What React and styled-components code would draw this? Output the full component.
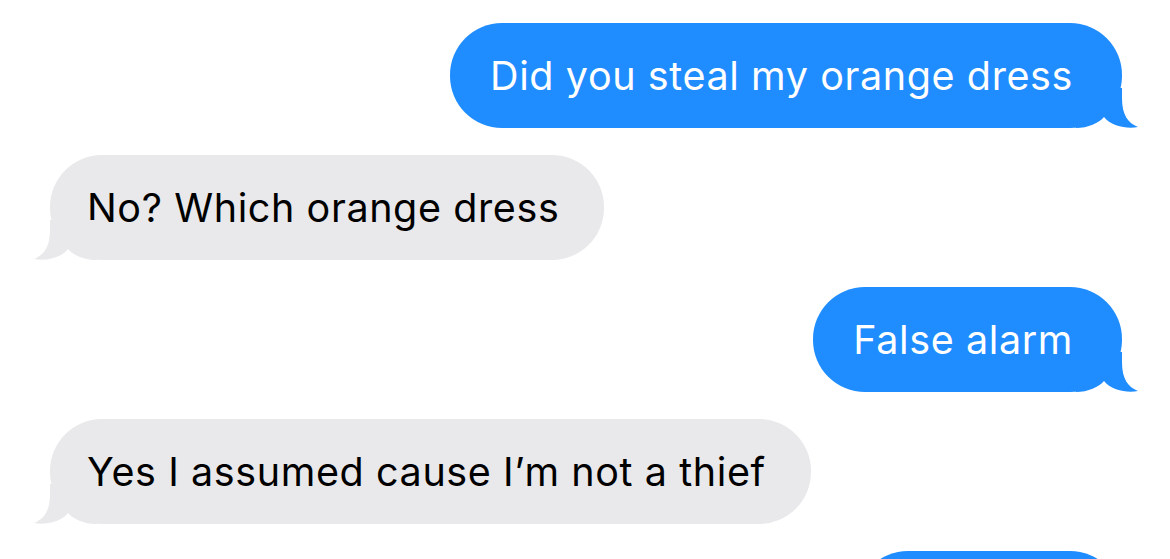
import React from "react";
import styled, { createGlobalStyle } from "styled-components";

const GlobalStyle = createGlobalStyle`
  html, body {
    margin: 0;
    padding: 0;
    background: #ffffff;
    overflow: hidden;
  }
`;

const Thread = styled.div`
  display: flex;
  flex-direction: column;
  gap: 27px;
  padding: 23px 48px 0 50px;
  height: 559px;
  box-sizing: border-box;
  overflow: hidden;
  font-family: Inter, "Liberation Sans", sans-serif;
`;

const Row = styled.div`
  display: flex;
  justify-content: ${(p) => (p.$mine ? "flex-end" : "flex-start")};
`;

const Bubble = styled.div`
  position: relative;
  flex-shrink: 0;
  box-sizing: border-box;
  height: 105px;
  min-width: ${(p) => p.$minWidth || 0}px;
  padding: ${(p) => (p.$mine ? "0 49px 0 40px" : "0 45px 0 37px")};
  border-radius: 52px;
  display: flex;
  align-items: center;
  white-space: nowrap;
  font-size: 39.5px;
  letter-spacing: 0.6px;
  color: ${(p) => (p.$mine ? "#ffffff" : "#000000")};
  background: ${(p) => (p.$mine ? "#1f8dff" : "#e9e9eb")};
`;

const Tail = styled.svg`
  position: absolute;
  bottom: 0;
  width: 62px;
  height: 40px;
  overflow: visible;
  ${(p) =>
    p.$mine
      ? "right: -16px;"
      : "left: -16px; transform: scaleX(-1);"}
`;

function BubbleTail({ mine }) {
  return (
    <Tail $mine={mine} viewBox="-46 -40 62 40">
      <path
        d="M 0 -40 L 0 -30 C 0 -13 6 -5 16 -1 C 6 1 -10 -1 -18 -11 C -23 -5 -34 0 -46 0 L -46 -40 Z"
        fill={mine ? "#1f8dff" : "#e9e9eb"}
      />
    </Tail>
  );
}

const messages = [
  { mine: true, text: "Did you steal my orange dress" },
  { mine: false, text: "No? Which orange dress" },
  { mine: true, text: "False alarm" },
  { mine: false, text: "Yes I assumed cause I’m not a thief" },
  { mine: true, text: "", minWidth: 266 },
];

export default function App() {
  return (
    <>
      <GlobalStyle />
      <Thread>
        {messages.map((m, i) => (
          <Row key={i} $mine={m.mine}>
            <Bubble $mine={m.mine} $minWidth={m.minWidth}>
              {m.text}
              <BubbleTail mine={m.mine} />
            </Bubble>
          </Row>
        ))}
      </Thread>
    </>
  );
}
